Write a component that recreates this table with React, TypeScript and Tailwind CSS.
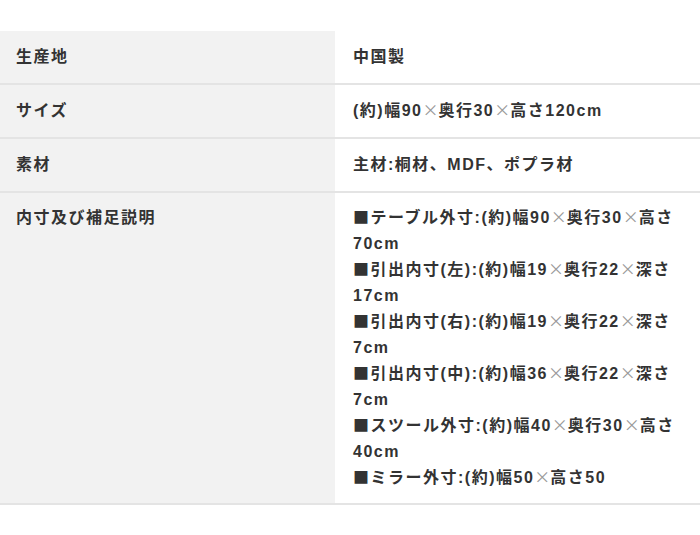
import React from "react";

const rows: { label: string; lines: string[] }[] = [
  { label: "生産地", lines: ["中国製"] },
  { label: "サイズ", lines: ["(約)幅90×奥行30×高さ120cm"] },
  { label: "素材", lines: ["主材:桐材、MDF、ポプラ材"] },
  {
    label: "内寸及び補足説明",
    lines: [
      "■テーブル外寸:(約)幅90×奥行30×高さ70cm",
      "■引出内寸(左):(約)幅19×奥行22×深さ17cm",
      "■引出内寸(右):(約)幅19×奥行22×深さ7cm",
      "■引出内寸(中):(約)幅36×奥行22×深さ7cm",
      "■スツール外寸:(約)幅40×奥行30×高さ40cm",
      "■ミラー外寸:(約)幅50×高さ50",
    ],
  },
];

function Txt({ s }: { s: string }) {
  const out: React.ReactNode[] = [];
  let buf = "";
  const flush = () => {
    if (buf) out.push(buf);
    buf = "";
  };
  [...s].forEach((ch, i) => {
    if (ch === "×") {
      flush();
      out.push(
        <span
          key={i}
          className="inline-block w-[16px] text-center font-normal leading-none text-[#999] font-['Noto_Sans_CJK_JP',sans-serif]"
        >
          ×
        </span>
      );
    } else if (ch === "■") {
      flush();
      out.push(
        <span key={i} className="leading-none font-['Noto_Sans_CJK_JP',sans-serif]">
          ■
        </span>
      );
    } else buf += ch;
  });
  flush();
  return <>{out}</>;
}

export default function App() {
  return (
    <div className="w-[700px] h-[535px] bg-white pt-[31px] text-[#333] text-[16px] font-bold leading-[26px] tracking-[1.5px] font-['Liberation_Sans','Noto_Sans_CJK_JP',sans-serif]">
      {rows.map((r, i) => (
        <div key={i} className="flex border-b-2 border-[#e4e4e4]">
          <div
            className={
              i === 3
                ? "w-[335px] shrink-0 bg-[#f2f2f2] pl-[16px] pr-4 py-[12px]"
                : "w-[335px] shrink-0 bg-[#f2f2f2] pl-[16px] pr-4 py-[13px]"
            }
          >
            {r.label}
          </div>
          <div
            className={
              i === 3 ? "flex-1 pl-[18px] pr-[14px] py-[12px]" : "flex-1 pl-[18px] pr-[14px] py-[13px]"
            }
          >
            {r.lines.map((l, j) => (
              <div key={j}>
                <Txt s={l} />
              </div>
            ))}
          </div>
        </div>
      ))}
    </div>
  );
}
